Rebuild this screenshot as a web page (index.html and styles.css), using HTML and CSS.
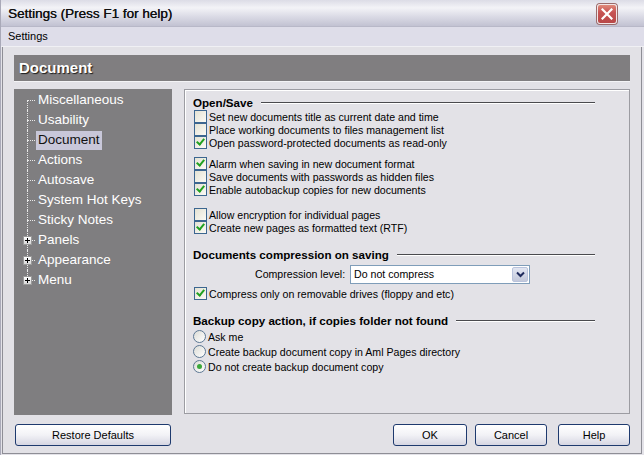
FILE: index.html
```html
<!DOCTYPE html>
<html lang="en">
<head>
    <meta charset="UTF-8">
    <title>Settings (Press F1 for help)</title>
    <link rel="stylesheet" href="styles.css">
</head>
<body>
    <div class="window">
        <div class="titlebar">
            <span class="title">Settings (Press F1 for help)</span>
            <span class="close">
                <svg width="12" height="12" viewBox="0 0 12 12"><path d="M1.5 1.5 L10.5 10.5 M10.5 1.5 L1.5 10.5" stroke="#fff" stroke-width="2.2" stroke-linecap="square"/></svg>
            </span>
        </div>
        <div class="menubar">Settings</div>

        <div class="frame">
            <div class="header">Document</div>

            <div class="main">
                <ul class="tree">
                    <li class="node first"><span class="label">Miscellaneous</span></li>
                    <li class="node"><span class="label">Usability</span></li>
                    <li class="node"><span class="label selected">Document</span></li>
                    <li class="node"><span class="label">Actions</span></li>
                    <li class="node"><span class="label">Autosave</span></li>
                    <li class="node"><span class="label">System Hot Keys</span></li>
                    <li class="node"><span class="label">Sticky Notes</span></li>
                    <li class="node"><span class="plus"></span><span class="label">Panels</span></li>
                    <li class="node"><span class="plus"></span><span class="label">Appearance</span></li>
                    <li class="node last"><span class="plus"></span><span class="label">Menu</span></li>
                </ul>

                <div class="panel">
                    <div class="group-title">Open/Save</div>
                    <div class="rows">
                        <label class="check"><span class="box"></span>Set new documents title as current date and time</label>
                        <label class="check"><span class="box"></span>Place working documents to files management list</label>
                        <label class="check"><span class="box on"></span>Open password-protected documents as read-only</label>
                    </div>
                    <div class="rows gap-s">
                        <label class="check"><span class="box on"></span>Alarm when saving in new document format</label>
                        <label class="check"><span class="box"></span>Save documents with passwords as hidden files</label>
                        <label class="check"><span class="box on"></span>Enable autobackup copies for new documents</label>
                    </div>
                    <div class="rows gap-m">
                        <label class="check"><span class="box"></span>Allow encryption for individual pages</label>
                        <label class="check"><span class="box on"></span>Create new pages as formatted text (RTF)</label>
                    </div>

                    <div class="group-title gap-m">Documents compression on saving</div>
                    <div class="field">
                        <span class="field-label">Compression level:</span>
                        <div class="select">
                            <span class="value">Do not compress</span>
                            <span class="arrow">
                                <svg width="9" height="7" viewBox="0 0 9 7"><path d="M1 1.5 L4.5 5 L8 1.5" fill="none" stroke="#1f2a5c" stroke-width="2"/></svg>
                            </span>
                        </div>
                    </div>
                    <label class="check single"><span class="box on"></span>Compress only on removable drives (floppy and etc)</label>

                    <div class="group-title gap-m">Backup copy action, if copies folder not found</div>
                    <div class="radios">
                        <label class="radio"><span class="dot"></span>Ask me</label>
                        <label class="radio"><span class="dot"></span>Create backup document copy in Aml Pages directory</label>
                        <label class="radio"><span class="dot on"></span>Do not create backup document copy</label>
                    </div>
                </div>
            </div>

            <div class="footer">
                <button class="btn restore">Restore Defaults</button>
                <button class="btn ok">OK</button>
                <button class="btn cancel">Cancel</button>
                <button class="btn help">Help</button>
            </div>
        </div>
    </div>
</body>
</html>
```

FILE: styles.css
```css
body {
    margin: 0;
    background: #e3e2e8;
    font-family: "Liberation Sans", Arial, sans-serif;
    color: #000;
}

.window {
    width: 644px;
    height: 455px;
    box-sizing: border-box;
    border-left: 1px solid #a9a9b8;
    overflow: hidden;
}

/* Title bar */
.titlebar {
    height: 26px;
    display: flex;
    align-items: center;
    justify-content: space-between;
    padding: 0 27px 0 7px;
    background: linear-gradient(#dcdce6, #f3f3f7 30%, #d6d6e2 70%, #c2c2d2);
    border-bottom: 1px solid #b8b8c8;
}

.title {
    font-size: 13.5px;
    color: #111;
    text-shadow: 0.3px 0 0 #111;
}

.close {
    width: 18px;
    height: 18px;
    display: flex;
    align-items: center;
    justify-content: center;
    border: 1px solid #f2e6e6;
    border-radius: 3px;
    background: linear-gradient(#e08a7a, #c75353 40%, #b84848);
    box-shadow: 0 0 0 1px #9a6a6a;
    margin-top: 1px;
}

.menubar {
    height: 19px;
    line-height: 19px;
    padding-left: 7px;
    font-size: 11px;
    background: #dedde9;
    border-bottom: 1px solid #f0f0f4;
}

/* Content frame */
.frame {
    width: 640px;
    height: 407px;
    box-sizing: border-box;
    margin-left: 1px;
    padding: 8px 11px 0 11px;
    border-right: 1px solid #8e8e96;
    border-bottom: 1px solid #8e8e96;
    border-left: 1px solid #8e8e96;
    background: #e2e1e6;
}

.header {
    height: 27px;
    box-sizing: border-box;
    padding: 4px 0 0 5px;
    background: #807e80;
    color: #fff;
    font-size: 15px;
    font-weight: bold;
    text-shadow: 1px 1px 1px #1a1a1a;
    border-bottom: 1px solid #f4f4f6;
}

.main {
    display: flex;
    gap: 12px;
    margin-top: 7px;
    height: 326px;
}

/* Tree */
.tree {
    width: 158px;
    margin: 0;
    padding: 1px 0 0 13px;
    box-sizing: border-box;
    list-style: none;
    background: #7f7e80;
    flex-shrink: 0;
}

.node {
    position: relative;
    height: 20px;
    display: flex;
    align-items: center;
    padding-left: 9px;
}

.node::before {
    content: "";
    position: absolute;
    left: 0;
    top: 0;
    bottom: 0;
    border-left: 1px dotted #e8e8e8;
}

.node.first::before { top: 10px; }
.node.last::before { bottom: 10px; }

.node::after {
    content: "";
    position: absolute;
    left: 0;
    top: 10px;
    width: 8px;
    border-top: 1px dotted #e8e8e8;
}

.plus {
    position: absolute;
    left: -4px;
    top: 6px;
    width: 7px;
    height: 7px;
    border: 1px solid #9a9a9a;
    background: linear-gradient(#ffffff, #d8d8d8);
    z-index: 1;
}

.plus::before,
.plus::after {
    content: "";
    position: absolute;
    background: #000;
}

.plus::before { left: 1px; top: 3px; width: 5px; height: 1px; }
.plus::after { left: 3px; top: 1px; width: 1px; height: 5px; }

.label {
    color: #fff;
    font-size: 13.5px;
    padding: 1px 2px 2px 2px;
    line-height: 16px;
}

.label.selected {
    background: #c8c7d9;
    color: #111;
}

/* Right panel */
.panel {
    flex: 1;
    box-sizing: border-box;
    height: 325px;
    padding: 4px 34px 0 8px;
    border: 1px solid #9c9ca2;
    box-shadow: inset 1px 1px 0 #ffffff;
    background: #e3e2e7;
    font-size: 10.6px;
}

.group-title {
    display: flex;
    align-items: center;
    gap: 8px;
    height: 16px;
    font-size: 11.6px;
    font-weight: bold;
}

.group-title::after {
    content: "";
    flex: 1;
    height: 1px;
    background: #4a4a4e;
    box-shadow: 0 1px 0 #ffffff;
}

.rows {
    display: flex;
    flex-direction: column;
}

.gap-s { margin-top: 8px; }
.gap-m { margin-top: 12px; }

.check,
.radio {
    display: flex;
    align-items: center;
    height: 13px;
    gap: 2px;
    white-space: nowrap;
}

.radio {
    height: 15px;
    gap: 2px;
}

.check.single { margin-top: 3px; }

.box {
    position: relative;
    width: 11px;
    height: 11px;
    margin-left: 1px;
    border: 1px solid #3c6690;
    background: linear-gradient(135deg, #e4e2d4, #fbfaf5);
    flex-shrink: 0;
}

.box.on::after {
    content: "";
    position: absolute;
    left: 3px;
    top: 0px;
    width: 3px;
    height: 6px;
    border-right: 2px solid #21a121;
    border-bottom: 2px solid #21a121;
    transform: rotate(40deg);
}

.dot {
    position: relative;
    width: 11px;
    height: 11px;
    border-radius: 50%;
    border: 1px solid #5d7894;
    background: linear-gradient(135deg, #dcdcd6, #ffffff);
    flex-shrink: 0;
}

.dot.on::after {
    content: "";
    position: absolute;
    left: 3px;
    top: 3px;
    width: 5px;
    height: 5px;
    border-radius: 50%;
    background: #3ba83b;
}

.field {
    display: flex;
    align-items: center;
    gap: 5px;
    height: 20px;
    margin-top: 2px;
    padding-left: 62px;
}

.select {
    width: 180px;
    height: 19px;
    box-sizing: border-box;
    display: flex;
    align-items: center;
    justify-content: space-between;
    border: 1px solid #7f9db9;
    background: #fff;
    padding: 1px 1px 1px 3px;
}

.arrow {
    width: 16px;
    height: 15px;
    display: flex;
    align-items: center;
    justify-content: center;
    box-sizing: border-box;
    border: 1px solid #b9c3dc;
    border-radius: 2px;
    background: linear-gradient(#e2e6f2, #c3c8da);
}

.radios {
    display: flex;
    flex-direction: column;
    margin-top: 1px;
}

/* Buttons */
.footer {
    display: flex;
    margin-top: 9px;
    padding-left: 1px;
}

.btn {
    height: 22px;
    box-sizing: border-box;
    border: 1px solid #1e3a6e;
    border-radius: 3px;
    background: linear-gradient(#ffffff, #f2f2f6 50%, #d6d6e2);
    font-family: "Liberation Sans", Arial, sans-serif;
    font-size: 11px;
    color: #000;
    padding: 0;
}

.restore { width: 156px; }
.ok { width: 74px; margin-left: auto; }
.cancel { width: 72px; margin-left: 8px; }
.help { width: 72px; margin-left: 11px; }
```
